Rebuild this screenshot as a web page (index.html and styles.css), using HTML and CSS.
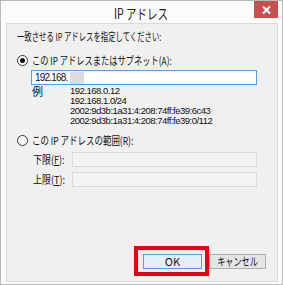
FILE: index.html
```html
<!DOCTYPE html>
<html lang="ja">
<head>
    <meta charset="UTF-8">
    <title>IP アドレス</title>
    <link rel="stylesheet" href="styles.css">
</head>
<body>
    <div class="window">
        <div class="titlebar">
            <span></span>
            <div class="title"><span class="txt">IP アドレス</span></div>
            <button class="close-button" aria-label="閉じる">
                <svg width="9" height="8" viewBox="0 0 9 8">
                    <path d="M1 0.5 L8 7.5 M8 0.5 L1 7.5" stroke="#fff" stroke-width="2"/>
                </svg>
            </button>
        </div>

        <div class="client">
            <div class="heading"><span class="txt">一致させる IP アドレスを指定してください:</span></div>

            <label class="radio-row">
                <span class="radio checked"></span>
                <span class="txt label-a">この IP アドレスまたはサブネット(A):</span>
            </label>
            <div class="ip-input">192.168.<span class="masked"></span></div>

            <div class="examples">
                <div class="ex-label">例</div>
                <div class="ex-list">
                    <div>192.168.0.12</div>
                    <div>192.168.1.0/24</div>
                    <div>2002:9d3b:1a31:4:208:74ff:fe39:6c43</div>
                    <div>2002:9d3b:1a31:4:208:74ff:fe39:0/112</div>
                </div>
            </div>

            <label class="radio-row second">
                <span class="radio"></span>
                <span class="txt label-r">この IP アドレスの範囲(R):</span>
            </label>
            <div class="range-row">
                <span class="range-label"><span class="txt">下限(<u>F</u>):</span></span>
                <span class="range-input"></span>
            </div>
            <div class="range-row">
                <span class="range-label"><span class="txt">上限(<u>T</u>):</span></span>
                <span class="range-input"></span>
            </div>

            <div class="buttons">
                <button class="btn btn-default">OK</button>
                <button class="btn"><span class="txt">キャンセル</span></button>
            </div>
        </div>
    </div>
</body>
</html>
```

FILE: styles.css
```css
body {
    margin: 0;
    background: #fff;
    font-family: "Noto Sans CJK JP", sans-serif;
    color: #111;
}

/* Meiryo UI 風に横幅を詰める */
.txt {
    display: inline-block;
    transform-origin: 0 50%;
    transform: scaleX(0.74);
}

.window {
    width: 283px;
    height: 285px;
    box-sizing: border-box;
    border: 1px solid #b9b9b9;
    background: #fbfbfb;
    display: flex;
    flex-direction: column;
}

.titlebar {
    height: 22px;
    display: grid;
    grid-template-columns: 1fr auto 1fr;
}

.title {
    align-self: end;
    font-size: 14px;
    line-height: 19px;
    color: #222;
}

.title .txt {
    transform-origin: 50% 50%;
    transform: scaleX(0.75);
}

.close-button {
    justify-self: end;
    width: 24px;
    height: 17px;
    margin: 0 4px 0 0;
    padding: 0;
    border: none;
    background: #c94f4f;
    display: flex;
    align-items: center;
    justify-content: center;
}

.client {
    flex: 1;
    margin: 0 4px 2px 5px;
    padding: 5px 20px 0 10px;
    border: 1px solid #dadada;
    background: #f0f0f0;
    display: flex;
    flex-direction: column;
    font-size: 11px;
    white-space: nowrap;
}

.heading {
    line-height: 14px;
}

.heading .txt {
    transform: scaleX(0.67);
}

.radio-row {
    margin-top: 10px;
    display: flex;
    align-items: center;
    line-height: 14px;
}

.radio-row.second {
    margin-top: 7px;
}

.label-a {
    transform: scaleX(0.75);
}

.label-r {
    transform: scaleX(0.77);
}

.radio {
    width: 9px;
    height: 9px;
    border: 1px solid #333;
    border-radius: 50%;
    background: #fff;
    margin-right: 4px;
    display: flex;
    align-items: center;
    justify-content: center;
}

.radio.checked::before {
    content: "";
    width: 5px;
    height: 5px;
    border-radius: 50%;
    background: #111;
}

.ip-input {
    margin: 3px 0 0 14px;
    height: 15px;
    box-sizing: border-box;
    border: 1px solid #569de5;
    background: #fff;
    padding-left: 3px;
    line-height: 13px;
    font-family: "Liberation Sans", sans-serif;
    font-size: 10px;
    letter-spacing: -0.8px;
    display: flex;
    align-items: center;
}

.masked {
    width: 14px;
    height: 12px;
    margin-left: 2px;
    background: #dcdcdc;
}

.examples {
    margin: 1px 0 0 15px;
    display: flex;
    line-height: 10px;
}

.ex-label {
    width: 38px;
}

.ex-list {
    font-family: "Liberation Sans", sans-serif;
    font-size: 9.5px;
    letter-spacing: -0.5px;
}

.range-row {
    margin: 4px 0 0 16px;
    display: flex;
    align-items: center;
}

.range-label {
    width: 39px;
}

.range-label .txt {
    transform: scaleX(0.82);
}

.range-input {
    flex: 1;
    height: 15px;
    box-sizing: border-box;
    border: 1px solid #dadada;
    background: #f3f3f3;
}

.buttons {
    margin: auto -9px 12px 0;
    display: flex;
    justify-content: flex-end;
    gap: 7px;
}

.btn {
    height: 15px;
    padding: 0;
    border: 1px solid #acacac;
    background: #e5e5e5;
    font-family: inherit;
    font-size: 11px;
    line-height: 13px;
    color: #111;
    width: 57px;
}

.btn .txt {
    transform-origin: 50% 50%;
}

.btn-default {
    position: relative;
    width: 59px;
    border-color: #569de5;
    background: #e8eef5;
}

/* 赤い枠で OK ボタンを強調 */
.btn-default::after {
    content: "";
    position: absolute;
    top: -9px;
    left: -10px;
    right: -8px;
    bottom: -8px;
    border: 4px solid #e60012;
}
```
